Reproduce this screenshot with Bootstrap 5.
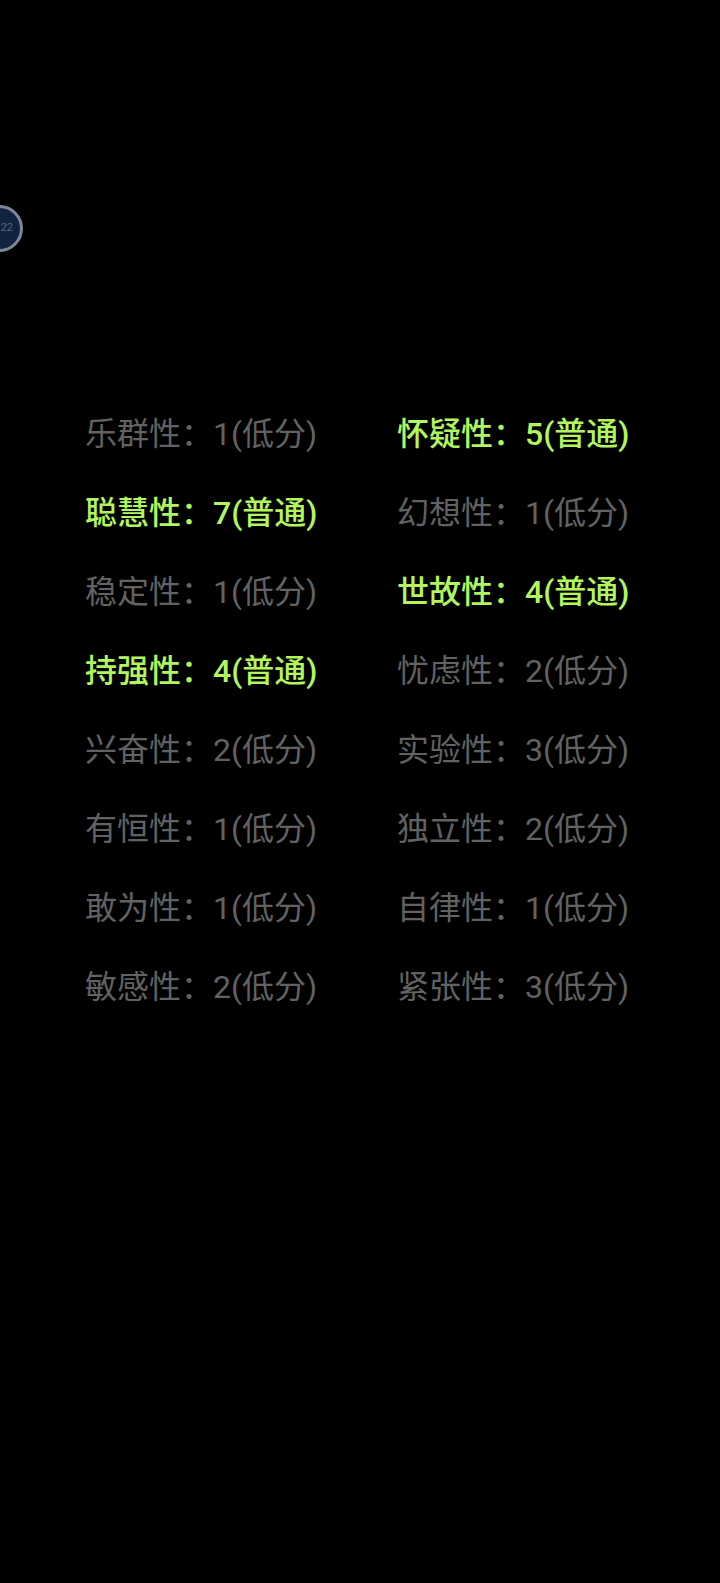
<!DOCTYPE html>
<html lang="zh"><head><meta charset="utf-8">
<link href="https://cdn.jsdelivr.net/npm/bootstrap@5.3.0/dist/css/bootstrap.min.css" rel="stylesheet">
<style>
html,body{background:#000;height:100%}
body{font-family:Roboto,"Noto Sans CJK SC","Noto Sans",sans-serif;overflow:hidden}
.screen{min-height:1583px;padding-top:412px;padding-left:85px;padding-right:60px;position:relative}
.trait-grid{display:grid;grid-template-columns:312px 1fr;grid-auto-rows:79px}
.trait{font-size:32px;line-height:44px;color:#626262;white-space:nowrap}
.trait.hi{color:#b2f55c;font-weight:500}
.floaty{position:absolute;left:-24px;top:205px;width:47px;height:47px;border-radius:50%;background:#12233f;border:3px solid #7f8897;color:#53647e;font-size:11px;display:flex;align-items:center;justify-content:flex-end;padding-right:7px}
</style></head><body>
<div class="screen">
<div class="floaty">22</div>
<div class="trait-grid">
<div class="trait">乐群性：1(低分)</div><div class="trait hi">怀疑性：5(普通)</div>
<div class="trait hi">聪慧性：7(普通)</div><div class="trait">幻想性：1(低分)</div>
<div class="trait">稳定性：1(低分)</div><div class="trait hi">世故性：4(普通)</div>
<div class="trait hi">持强性：4(普通)</div><div class="trait">忧虑性：2(低分)</div>
<div class="trait">兴奋性：2(低分)</div><div class="trait">实验性：3(低分)</div>
<div class="trait">有恒性：1(低分)</div><div class="trait">独立性：2(低分)</div>
<div class="trait">敢为性：1(低分)</div><div class="trait">自律性：1(低分)</div>
<div class="trait">敏感性：2(低分)</div><div class="trait">紧张性：3(低分)</div>
</div></div>
<script src="https://cdn.jsdelivr.net/npm/bootstrap@5.3.0/dist/js/bootstrap.bundle.min.js"></script>
</body></html>
